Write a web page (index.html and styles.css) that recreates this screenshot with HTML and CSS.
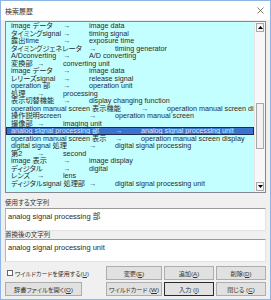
FILE: index.html
```html
<!DOCTYPE html>
<html lang="ja">
<head>
<meta charset="utf-8">
<title>検索履歴</title>
<link rel="stylesheet" href="styles.css">
</head>
<body>
<div class="window">
  <div class="titlebar">
    <span class="title">検索履歴</span>
    <svg class="close" width="7" height="7" viewBox="0 0 7 7"><path d="M0.5 0.5 L6.5 6.5 M6.5 0.5 L0.5 6.5" stroke="#555" stroke-width="0.8" fill="none"/></svg>
  </div>
  <div class="content">
    <div class="listbox">
      <ul class="items">
        <li>image データ&#9;→&#9;image data</li>
        <li>タイミングsignal&#9;→&#9;timing signal</li>
        <li>露出time&#9;→&#9;exposure time</li>
        <li>タイミングジェネレータ&#9;→&#9;timing generator</li>
        <li>A/Dconverting&#9;→&#9;A/D converting</li>
        <li>変換部&#9;→&#9;converting unit</li>
        <li>image データ&#9;→&#9;image data</li>
        <li>レリーズsignal&#9;→&#9;release signal</li>
        <li>operation 部&#9;→&#9;operation unit</li>
        <li>処理&#9;→&#9;processing</li>
        <li>表示切替機能&#9;→&#9;display changing function</li>
        <li>operation manual screen 表示機能&#9;→&#9;operation manual screen display</li>
        <li>操作説明screen&#9;&#9;→&#9;operation manual screen</li>
        <li>撮像部&#9;→&#9;imaging unit</li>
        <li class="sel">analog signal processing 部&#9;→&#9;analog signal processing unit</li>
        <li>operation manual screen 表示&#9;→&#9;operation manual screen display</li>
        <li>digital signal 処理&#9;→&#9;digital signal processing</li>
        <li>第2&#9;→&#9;second</li>
        <li>image 表示&#9;→&#9;image display</li>
        <li>ディジタル&#9;→&#9;digital</li>
        <li>レンズ&#9;→&#9;lens</li>
        <li>ディジタルsignal 処理部&#9;→&#9;digital signal processing unit</li>
      </ul>
      <div class="vscroll">
        <div class="sbtn"><svg width="5" height="3" viewBox="0 0 5 3"><path d="M0 3 L2.5 0 L5 3 Z" fill="#000"/></svg></div>
        <div class="track"><div class="thumb"></div></div>
        <div class="sbtn"><svg width="5" height="3" viewBox="0 0 5 3"><path d="M0 0 L5 0 L2.5 3 Z" fill="#000"/></svg></div>
      </div>
    </div>
    <div class="label">使用する文字列</div>
    <div class="edit">analog signal processing 部</div>
    <div class="label label2">置換後の文字列</div>
    <div class="edit">analog signal processing unit</div>
    <div class="actions">
      <div class="left">
        <div class="check"><span class="box"></span><span>ワイルドカードを使用する(<u>U</u>)</span></div>
        <button class="btn">辞書ファイルを開く(<u>O</u>)</button>
      </div>
      <div class="buttons">
        <button class="btn">変更(<u>E</u>)</button>
        <button class="btn">追加(<u>A</u>)</button>
        <button class="btn">削除(<u>D</u>)</button>
        <button class="btn">ワイルドカード (<u>W</u>)</button>
        <button class="btn default">入力 (<u>I</u>)</button>
        <button class="btn">閉じる (<u>C</u>)</button>
      </div>
    </div>
  </div>
</div>
</body>
</html>
```

FILE: styles.css
```css
* {
  box-sizing: border-box;
  margin: 0;
  padding: 0;
}

html, body {
  width: 271px;
  height: 300px;
  overflow: hidden;
}

body {
  background: #f0f0f0;
  font-family: "Liberation Sans", "Noto Sans CJK JP", sans-serif;
  color: #000;
  font-feature-settings: "palt" 1;
}

.window {
  width: 271px;
  height: 300px;
  border: 1px solid #8db6e4;
  display: flex;
  flex-direction: column;
  background: #f0f0f0;
}

.titlebar {
  height: 19px;
  background: #fff;
  display: flex;
  align-items: center;
  justify-content: space-between;
  padding: 0 6px 0 4px;
}

.title {
  font-size: 7px;
  color: #333;
}

.content {
  flex: 1;
  display: flex;
  flex-direction: column;
  padding: 1px 4px 0 4px;
}

.listbox {
  height: 172px;
  border: 1px solid #828790;
  background: #c4ffff;
  display: flex;
}

.items {
  flex: 1;
  list-style: none;
  overflow: hidden;
  font-size: 7.2px;
  line-height: 7.5px;
  color: #2a2a2a;
}

.items li {
  padding-left: 5px;
  white-space: pre;
  tab-size: 26px;
  height: 7.5px;
}

.items li.sel {
  background: #3a73cc;
  color: #dfeaff;
  outline: 1px solid #1b2c55;
  outline-offset: -1px;
}

.vscroll {
  width: 11px;
  display: flex;
  flex-direction: column;
  background: #f7f7f7;
  border-left: 1px solid #e6e6e6;
}

.sbtn {
  height: 9px;
  display: flex;
  align-items: center;
  justify-content: center;
  border: 1px solid #a8a8a8;
  background: #f4f4f4;
  margin: 1px;
}

.track {
  flex: 1;
  display: flex;
  flex-direction: column;
}

.thumb {
  margin: 70px 1px 0 1px;
  height: 46px;
  border: 1px solid #a8a8a8;
  background: #f2f2f2;
}

.label {
  height: 15px;
  padding-top: 5px;
  font-size: 6.5px;
  line-height: 9px;
  color: #333;
}

.label2 {
  height: 8px;
  padding-top: 0;
  line-height: 8px;
}

.edit {
  height: 23px;
  background: #fff;
  border-top: 1px solid #9a9a9a;
  border-left: 1px solid #b5b5b5;
  border-right: 1px solid #e3e3e3;
  border-bottom: 1px solid #e3e3e3;
  padding: 3px 0 0 2px;
  font-size: 7.5px;
  line-height: 9px;
  color: #2a2a2a;
}

.actions {
  margin-top: 4px;
  display: flex;
  justify-content: space-between;
}

.left {
  width: 77px;
  display: flex;
  flex-direction: column;
  gap: 2px;
}

.check {
  height: 14px;
  display: flex;
  align-items: center;
  gap: 2px;
  padding-left: 2px;
  font-size: 6px;
  color: #333;
  white-space: nowrap;
}

.box {
  width: 6px;
  height: 6px;
  flex: none;
  border: 1px solid #666;
  background: #fff;
}

.buttons {
  width: 160px;
  display: grid;
  grid-template-columns: 56px 50px 50px;
  grid-auto-rows: 14px;
  gap: 2px;
}

.btn {
  height: 14px;
  background: #e1e1e1;
  border: 1px solid #adadad;
  font-family: "Liberation Sans", "Noto Sans CJK JP", sans-serif;
  font-feature-settings: "palt" 1;
  font-size: 6.2px;
  color: #333;
  white-space: nowrap;
  display: flex;
  align-items: center;
  justify-content: center;
}

.btn.default {
  border: 1px solid #2b2b2b;
}
```
